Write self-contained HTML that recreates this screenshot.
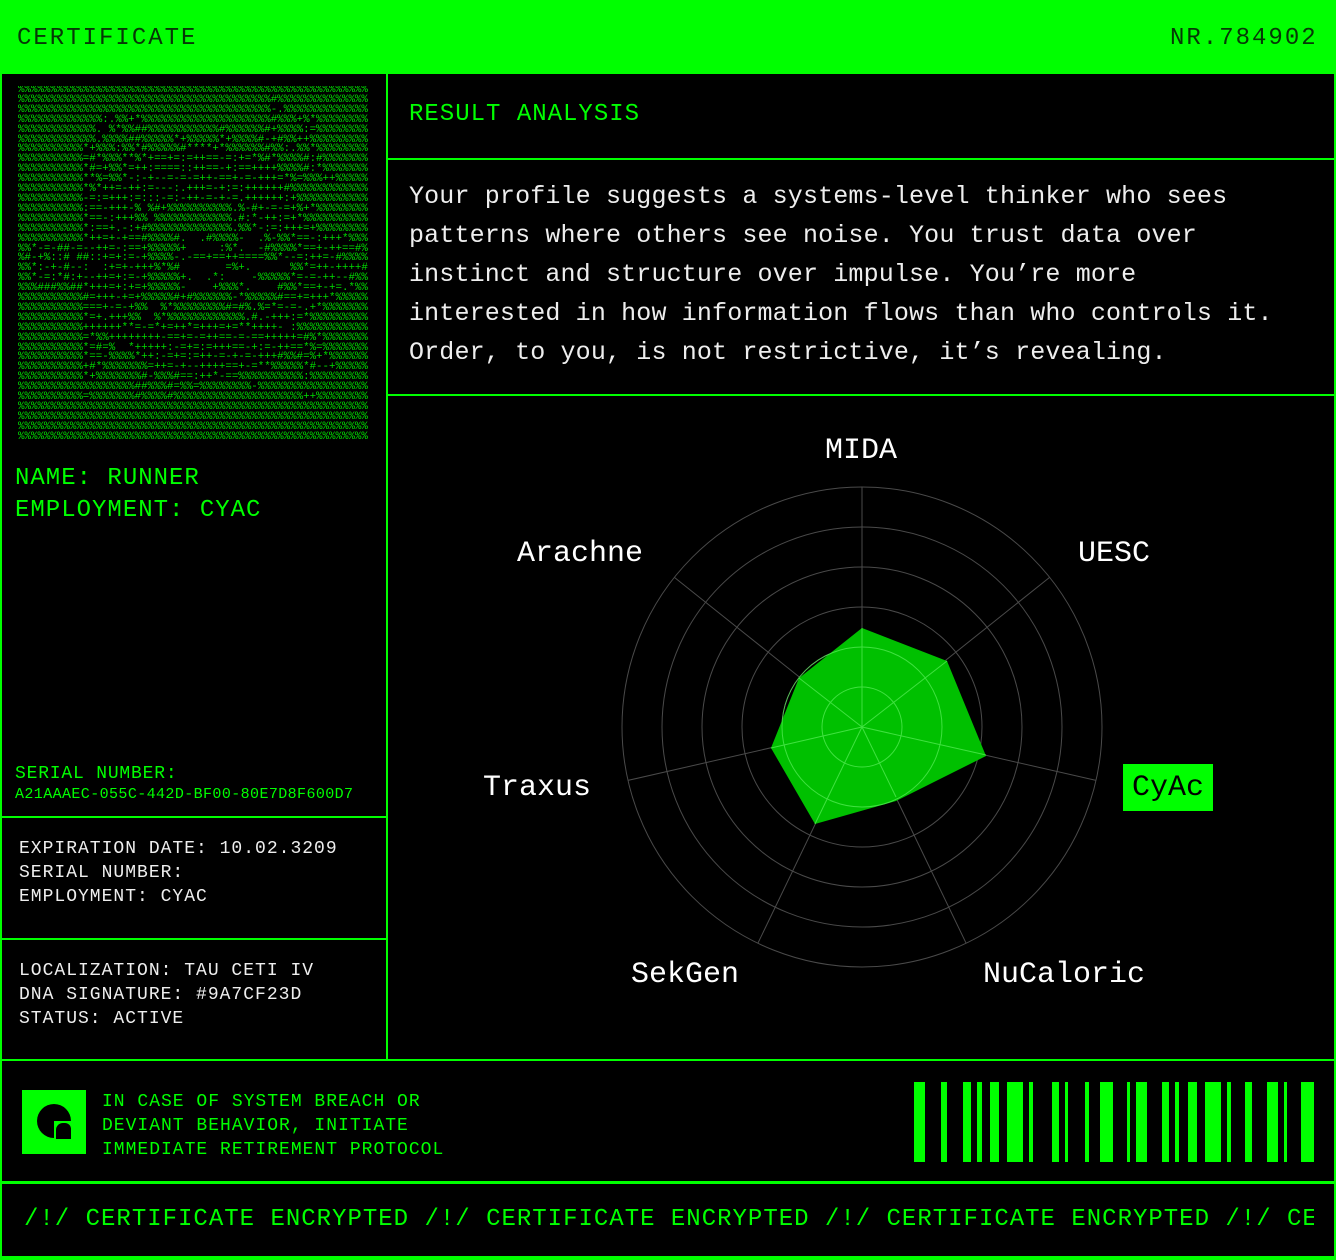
<!DOCTYPE html>
<html><head><meta charset="utf-8"><style>
*{margin:0;padding:0;box-sizing:border-box}
html,body{width:1336px;height:1260px;background:#000;overflow:hidden}
body{position:relative;font-family:"Liberation Mono",monospace;color:#00ff00}
.a{position:absolute}
.g{background:#00ff00}
.t{white-space:pre}
</style></head><body>
<!-- header -->
<div class="a g" style="left:0;top:0;width:1336px;height:74px"></div>
<div class="a t" style="left:17px;top:25px;font-size:24px;letter-spacing:2px;color:#063806">CERTIFICATE</div>
<div class="a t" style="left:1170px;top:25px;font-size:24px;letter-spacing:2px;color:#063806">NR.784902</div>
<!-- outer borders -->
<div class="a g" style="left:0;top:0;width:2px;height:1260px"></div>
<div class="a g" style="left:1334px;top:0;width:2px;height:1260px"></div>
<div class="a g" style="left:0;top:1256px;width:1336px;height:4px"></div>
<div class="a g" style="left:386px;top:74px;width:2px;height:987px"></div>
<div class="a g" style="left:388px;top:158px;width:948px;height:2px"></div>
<div class="a g" style="left:388px;top:394px;width:948px;height:2px"></div>
<div class="a g" style="left:0;top:816px;width:388px;height:2px"></div>
<div class="a g" style="left:0;top:938px;width:388px;height:2px"></div>
<div class="a g" style="left:0;top:1059px;width:1336px;height:2px"></div>
<div class="a g" style="left:0;top:1181px;width:1336px;height:3px"></div>

<!-- ascii art -->
<div class="a t" style="left:18px;top:86px;width:353px;height:358px;overflow:hidden;font-size:10.8px;line-height:9.9px;color:#00dd00">%%%%%%%%%%%%%%%%%%%%%%%%%%%%%%%%%%%%%%%%%%%%%%%%%%%%%%
%%%%%%%%%%%%%%%%%%%%%%%%%%%%%%%%%%%%%%%#%%%%%%%%%%%%%%
%%%%%%%%%%%%%%%%%%%%%%%%%%%%%%%%%%%%%%%-.%%%%%%%%%%%%%
%%%%%%%%%%%%%:.%%+*%%%%%%%%%%%%%%%%%%%%#%%%+%*%%%%%%%%
%%%%%%%%%%%%. %*%%##%%%%%%%%%%%#%%%%%%#+%%%%:=%%%%%%%%
%%%%%%%%%%%%.%%%%##%%%%%*+%%%%%*+%%%%#-+#%%++%%%%%%%%%
%%%%%%%%%%*+%%%:%%*#%%%%%#****+*%%%%%%#%%:.%%*%%%%%%%%
%%%%%%%%%%=#*%%%**%*+==+=:=++==-=:+=*%#*%%%%#:#%%%%%%%
%%%%%%%%%%*#=+%%*=++:====::++==-+:==++++%%%%#:*%%%%%%%
%%%%%%%%%%**%=%%*-:-+--=-=-=++-==+-=-+++=*%=%%%++%%%%%
%%%%%%%%%%*%*++=-++:=---:.+++=-+:=:++++++#%%%%%%%%%%%%
%%%%%%%%%%-=:=+++:=:::-=:-++-=-+-=.++++++:+%%%%%%%%%%%
%%%%%%%%%%:==-+++-% %#+%%%%%%%%%%.%-#+-=-=+%+*%%%%%%%%
%%%%%%%%%%*==-:+++%% %%%%%%%%%%%%.#:*-++:=+*%%%%%%%%%%
%%%%%%%%%%*:==+.-:+#%%%%%%%%%%%%%.%%*-:=:+++=+%%%%%%%%
%%%%%%%%%%*++=+-+==#%%%%#.  .#%%%%-  .%-%%*==-:+++*%%%
%%*-=-##-=--++=-:==+%%%%%+     :%*.  -#%%%%*==+-++==#%
%#-+%::# ##::+=+:=-+%%%%-.-==+==++====%%*--=:++=-#%%%%
%%*:-+-#--:  :+=+-+++%*%#       =%+.      %%*=++-++++#
%%*-=:*#:+--++=+:=-+%%%%%+.  .*:    -%%%%%*=-=-++--#%%
%%%###%%##*+++=+:+=+%%%%%-    +%%%*.    #%%*==+-+=.*%%
%%%%%%%%%%#=+++-+=+%%%%%#+#%%%%%%-*%%%%%#==+=+++*%%%%%
%%%%%%%%%%===+-=-+%%  %*%%%%%%%%#=#%.%=*=-=-.+*%%%%%%%
%%%%%%%%%%*=+.+++%%  %*%%%%%%%%%%%%.#.-+++:=*%%%%%%%%%
%%%%%%%%%%++++++**=-=*+=++*=+++=+=**++++- :%%%%%%%%%%%
%%%%%%%%%%=*%%++++++++-==+=-=++==-=-==+++++=#%*%%%%%%%
%%%%%%%%%%*=#=%  *+++++:-=+=:=+++==-+:=-++==*%=%%%%%%%
%%%%%%%%%%*==-%%%%*++:-=+=:=++-=-+-=-+++#%%#=%+*%%%%%%
%%%%%%%%%%+#*%%%%%%%=++=-+--++++==+-=**%%%%%*#--+%%%%%
%%%%%%%%%%*+%%%%%%%#-%%%#==:++*-==%%%%%%%%%%:%%%%%%%%%
%%%%%%%%%%%%%%%%%%##%%%#=%%=%%%%%%%%-%%%%%%%%%%%%%%%%%
%%%%%%%%%%=%%%%%%%#%%%%#%%%%%%%%%%%%%%%%%%%%++%%%%%%%%
%%%%%%%%%%%%%%%%%%%%%%%%%%%%%%%%%%%%%%%%%%%%%%%%%%%%%%
%%%%%%%%%%%%%%%%%%%%%%%%%%%%%%%%%%%%%%%%%%%%%%%%%%%%%%
%%%%%%%%%%%%%%%%%%%%%%%%%%%%%%%%%%%%%%%%%%%%%%%%%%%%%%
%%%%%%%%%%%%%%%%%%%%%%%%%%%%%%%%%%%%%%%%%%%%%%%%%%%%%%</div>

<div class="a t" style="left:15px;top:463px;font-size:24px;letter-spacing:1px;line-height:32px">NAME: RUNNER
EMPLOYMENT: CYAC</div>
<div class="a t" style="left:15px;top:764px;font-size:18px;letter-spacing:0.8px">SERIAL NUMBER:</div>
<div class="a t" style="left:15px;top:786px;font-size:15px;letter-spacing:0.4px">A21AAAEC-055C-442D-BF00-80E7D8F600D7</div>
<div class="a t" style="left:19px;top:837px;font-size:18px;letter-spacing:1px;line-height:24px;color:#eee">EXPIRATION DATE: 10.02.3209
SERIAL NUMBER:
EMPLOYMENT: CYAC</div>
<div class="a t" style="left:19px;top:959px;font-size:18px;letter-spacing:1px;line-height:24px;color:#eee">LOCALIZATION: TAU CETI IV
DNA SIGNATURE: #9A7CF23D
STATUS: ACTIVE</div>

<!-- right -->
<div class="a t" style="left:409px;top:101px;font-size:24px;letter-spacing:1px">RESULT ANALYSIS</div>
<div class="a t" style="left:409px;top:177px;font-size:25px;line-height:39px;letter-spacing:0.15px;color:#eee">Your profile suggests a systems-level thinker who sees
patterns where others see noise. You trust data over
instinct and structure over impulse. You’re more
interested in how information flows than who controls it.
Order, to you, is not restrictive, it’s revealing.</div>

<svg class="a" style="left:388px;top:396px" width="946" height="663">
<g transform="translate(474,331)" fill="none" stroke="#4a4a4a" stroke-width="1">
<circle r="40"/><circle r="80"/><circle r="120"/><circle r="160"/><circle r="200"/><circle r="240"/>
<line x1="0" y1="0" x2="0" y2="-240"/>
<line x1="0" y1="0" x2="187.6" y2="-149.6"/>
<line x1="0" y1="0" x2="234" y2="53.4"/>
<line x1="0" y1="0" x2="104.1" y2="216.2"/>
<line x1="0" y1="0" x2="-104.1" y2="216.2"/>
<line x1="0" y1="0" x2="-234" y2="53.4"/>
<line x1="0" y1="0" x2="-187.6" y2="-149.6"/>
</g>
<polygon points="474,232 559,265 598,360 508,405 427,428 383,352 411,282" fill="#00c000"/>
<g transform="translate(474,331)" fill="none" stroke="#5cf05c" stroke-width="1" opacity="0.7">
<circle r="40"/><circle r="80"/>
<line x1="0" y1="0" x2="0" y2="-99"/>
<line x1="0" y1="0" x2="85" y2="-66"/>
<line x1="0" y1="0" x2="124" y2="28"/>
<line x1="0" y1="0" x2="34" y2="70"/>
<line x1="0" y1="0" x2="-47" y2="97"/>
<line x1="0" y1="0" x2="-91" y2="21"/>
<line x1="0" y1="0" x2="-63" y2="-49"/>
</g>
</svg>
<div class="a t" style="left:825px;top:434px;font-size:30px;color:#fff">MIDA</div>
<div class="a t" style="left:517px;top:537px;font-size:30px;color:#fff">Arachne</div>
<div class="a t" style="left:1078px;top:537px;font-size:30px;color:#fff">UESC</div>
<div class="a t" style="left:483px;top:771px;font-size:30px;color:#fff">Traxus</div>
<div class="a t" style="left:631px;top:958px;font-size:30px;color:#fff">SekGen</div>
<div class="a t" style="left:983px;top:958px;font-size:30px;color:#fff">NuCaloric</div>
<div class="a g t" style="left:1123px;top:764px;width:90px;height:47px;font-size:30px;color:#000;padding:7px 0 0 9px">CyAc</div>

<!-- footer -->
<svg class="a" style="left:22px;top:1090px" width="64" height="64">
<rect width="64" height="64" fill="#00ff00"/>
<circle cx="32" cy="31" r="17" fill="#000"/>
<rect x="32" y="31" width="18" height="19" fill="#00ff00"/>
<path d="M34 49 V40 A7 7 0 0 1 41 33 H43 A6 6 0 0 1 49 39 V49 Z" fill="#000"/>
</svg>
<div class="a t" style="left:102px;top:1090px;font-size:18px;letter-spacing:1px;line-height:24px">IN CASE OF SYSTEM BREACH OR
DEVIANT BEHAVIOR, INITIATE
IMMEDIATE RETIREMENT PROTOCOL</div>
<svg class="a" style="left:0;top:1082px" width="1336" height="80" fill="#00ff00">
<rect x="914" width="11" height="80"/><rect x="941" width="6" height="80"/><rect x="963" width="8" height="80"/>
<rect x="977" width="5" height="80"/><rect x="990" width="9" height="80"/><rect x="1007" width="16" height="80"/>
<rect x="1029" width="4" height="80"/><rect x="1052" width="7" height="80"/><rect x="1065" width="3" height="80"/>
<rect x="1085" width="4" height="80"/><rect x="1100" width="13" height="80"/><rect x="1127" width="3" height="80"/>
<rect x="1136" width="11" height="80"/><rect x="1162" width="7" height="80"/><rect x="1175" width="4" height="80"/>
<rect x="1188" width="9" height="80"/><rect x="1205" width="16" height="80"/><rect x="1227" width="4" height="80"/>
<rect x="1245" width="7" height="80"/><rect x="1267" width="11" height="80"/><rect x="1284" width="3" height="80"/>
<rect x="1301" width="13" height="80"/>
</svg>
<div class="a t" style="left:24px;top:1206px;width:1290px;overflow:hidden;font-size:24px;letter-spacing:1px">/!/ CERTIFICATE ENCRYPTED /!/ CERTIFICATE ENCRYPTED /!/ CERTIFICATE ENCRYPTED /!/ CE</div>
</body></html>
